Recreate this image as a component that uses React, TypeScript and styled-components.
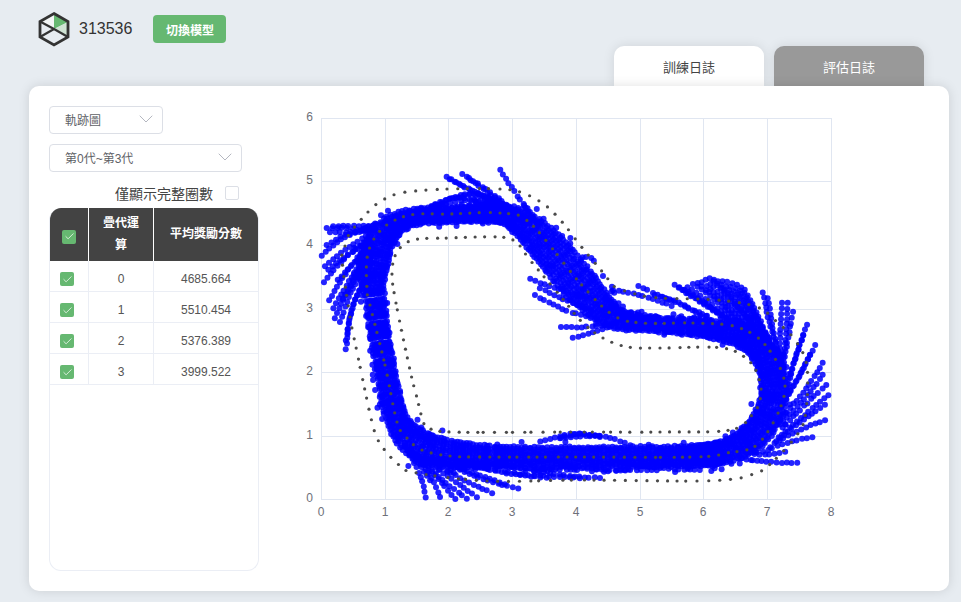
import React from 'react';
import styled, {createGlobalStyle} from 'styled-components';
import {Check, ChevronDown} from 'lucide-react';

type Pt = [number, number, number?];

// seeded so the scatter stays the same between renders
let seed = 12345;
const rnd = () => {
    seed = (seed * 1664525 + 1013904223) % 4294967296;
    return seed / 4294967296;
};

const sampleCurve = (pts: Pt[], step: number, closed = false) => {
    const get = (i: number) => closed
        ? pts[(i + pts.length) % pts.length]
        : pts[Math.max(0, Math.min(pts.length - 1, i))];
    const dense: number[][] = [];
    const segs = closed ? pts.length : pts.length - 1;
    for (let i = 0; i < segs; i++) {
        const [a, b, c, d] = [get(i - 1), get(i), get(i + 1), get(i + 2)];
        for (let k = 0; k < 24; k++) {
            const t = k / 24;
            const cr = (p0: number, p1: number, p2: number, p3: number) =>
                0.5 * (2 * p1 + (p2 - p0) * t + (2 * p0 - 5 * p1 + 4 * p2 - p3) * t * t + (3 * p1 - p0 - 3 * p2 + p3) * t * t * t);
            dense.push([
                cr(a[0], b[0], c[0], d[0]),
                cr(a[1], b[1], c[1], d[1]),
                (b[2] ?? 0) * (1 - t) + (c[2] ?? 0) * t,
            ]);
        }
    }
    if (!closed) {
        const last = pts[pts.length - 1];
        dense.push([last[0], last[1], last[2] ?? 0]);
    }
    const out: { x: number, y: number, w: number, nx: number, ny: number }[] = [];
    let left = 0;
    for (let i = 1; i < dense.length; i++) {
        const [x0, y0, w0] = dense[i - 1];
        const [x1, y1] = dense[i];
        const len = Math.hypot(x1 - x0, y1 - y0) || 1;
        if (left <= 0) {
            out.push({x: x0, y: y0, w: w0, nx: -(y1 - y0) / len, ny: (x1 - x0) / len});
            left += step;
        }
        left -= len;
    }
    return out;
};

const bandLine: Pt[] = [
    [375, 300, 9], [385, 365, 9], [397, 420, 10], [420, 446, 15], [453, 454, 13], [500, 457, 10],
    [600, 457, 10], [690, 456, 10], [730, 450, 11], [755, 435, 13], [770, 410, 13], [774, 385, 12],
    [766, 358, 12], [745, 337, 11], [700, 328, 8], [642, 323, 7], [612, 316, 11], [582, 288, 17],
    [552, 252, 17], [526, 226, 13], [500, 214, 9], [450, 215, 7], [410, 218, 8], [385, 233, 12], [373, 265, 15],
];

const innerLine: Pt[] = [
    [396, 303], [392, 273], [397, 252], [413, 240], [448, 238], [500, 237], [517, 243], [530, 260], [562, 298],
    [582, 322], [603, 338], [628, 347], [660, 348], [723, 348], [750, 362], [760, 383], [760, 400], [752, 415],
    [730, 430], [660, 432], [580, 432], [452, 432], [428, 427], [423, 421], [417, 398], [410, 370],
];

const middleLine: Pt[] = [
    [385, 365], [397, 422], [407, 438], [422, 450], [450, 456], [487, 457], [580, 457], [693, 457], [727, 453],
    [760, 442], [785, 390], [767, 347], [737, 327], [693, 323], [642, 323], [613, 315], [580, 283], [530, 223],
    [500, 213], [448, 214], [410, 215], [383, 228], [368, 253], [367, 290], [370, 305],
];

const outerLine: Pt[] = [
    [368, 212], [378, 203], [391, 196], [406, 192], [447, 189], [500, 189], [523, 193], [545, 205], [563, 223],
    [580, 245], [605, 275], [615, 287], [640, 295], [660, 298], [717, 300], [757, 307], [777, 322], [795, 340],
    [807, 367], [805, 417], [793, 440], [767, 467], [755, 473], [740, 478], [697, 481], [580, 480], [487, 481],
    [412, 472], [397, 463], [388, 454], [378, 440], [371, 418], [357, 352], [350, 317], [342, 260], [345, 246], [350, 233],
];

// [end of the streak, bend, where it joins the band]
const leftFan: Pt[][] = [
    [[333, 226], [350, 226], [375, 226]], [[327, 228], [345, 228], [372, 232]], [[330, 232], [350, 232], [378, 228]],
    [[327, 245], [345, 235], [375, 230]], [[322, 256], [340, 240], [375, 224]], [[325, 266], [345, 250], [372, 232]],
    [[328, 270], [348, 255], [372, 240]], [[324, 282], [345, 258], [372, 236]], [[329, 300], [348, 270], [372, 240]],
    [[333, 308], [350, 280], [370, 245]], [[335, 318], [350, 285], [372, 250]], [[340, 322], [352, 290], [372, 255]],
    [[346, 340], [355, 300], [375, 270]], [[346, 349], [352, 310], [372, 262]],
];

const rightFanTop: Pt[][] = [
    [[675, 285], [698, 298], [735, 325]], [[682, 290], [705, 305], [745, 332]], [[693, 284], [715, 300], [750, 335]],
    [[702, 282], [728, 306], [762, 345]], [[710, 278], [735, 305], [768, 345]], [[718, 281], [742, 310], [772, 350]],
    [[727, 282], [748, 310], [775, 352]], [[737, 285], [755, 315], [776, 355]], [[745, 290], [760, 320], [778, 360]],
];

const rightFanLow: Pt[][] = [
    [[763, 292], [770, 325], [783, 365]], [[768, 298], [773, 330], [782, 372]], [[782, 303], [780, 340], [782, 380]],
    [[788, 303], [785, 345], [780, 385]], [[793, 312], [786, 350], [781, 390]], [[807, 325], [795, 360], [785, 400]],
    [[803, 335], [793, 365], [783, 398]], [[815, 345], [800, 375], [780, 410]], [[810, 355], [797, 380], [780, 405]],
    [[823, 363], [805, 390], [780, 420]], [[823, 375], [805, 398], [780, 425]], [[826, 385], [805, 405], [780, 430]],
    [[828, 395], [805, 415], [775, 440]], [[825, 405], [803, 420], [775, 442]], [[825, 420], [800, 430], [770, 445]],
    [[812, 437], [790, 442], [760, 453]],
];

const bottomFan: Pt[][] = [
    [[426, 497], [420, 475], [405, 445]], [[430, 480], [420, 465], [410, 448]], [[440, 497], [430, 475], [410, 448]],
    [[455, 499], [435, 475], [412, 450]], [[467, 499], [440, 478], [415, 452]], [[477, 497], [450, 478], [420, 455]],
    [[492, 493], [460, 478], [425, 456]], [[505, 484], [470, 472], [430, 458]], [[518, 489], [480, 478], [430, 456]],
    [[547, 478], [500, 472], [440, 458]], [[580, 478], [520, 474], [450, 462]], [[577, 470], [520, 468], [455, 460]],
];

const otherStreaks: Pt[][] = [
    [[343, 300], [355, 280], [375, 250]], [[338, 280], [355, 262], [375, 240]],
    [[447, 177], [470, 190], [510, 207]], [[450, 179], [475, 192], [515, 210]], [[462, 174], [485, 190], [525, 222]],
    [[469, 178], [490, 192], [520, 215]], [[500, 170], [515, 192], [540, 228]],
    [[432, 207], [470, 194], [512, 212]], [[422, 212], [460, 198], [525, 218]], [[453, 198], [485, 196], [530, 225]],
    [[440, 205], [480, 200], [520, 214]], [[470, 205], [500, 205], [530, 220]],
    [[530, 279], [560, 290], [590, 300]], [[535, 295], [565, 310], [600, 320]], [[540, 288], [565, 300], [595, 312]],
    [[561, 327], [585, 327], [612, 324]], [[573, 338], [590, 333], [615, 325]],
    [[638, 286], [670, 300], [712, 318]], [[613, 290], [640, 295], [672, 306]], [[655, 295], [680, 303], [705, 318]],
    [[797, 463], [770, 462], [738, 458]], [[785, 452], [765, 455], [745, 452]],
    [[700, 470], [660, 468], [620, 463]], [[657, 470], [610, 470], [560, 466]], [[600, 478], [570, 476], [530, 470]],
    [[560, 438], [580, 434], [602, 437]], [[630, 445], [600, 436], [560, 438]], [[540, 442], [570, 434], [600, 436]],
];

// adds a streak between each two neighbours, the top of the right fan is dense in the chart
const thicken = (fan: Pt[][]) => fan.flatMap((s, i) => {
    const next = fan[i + 1];
    if (!next) return [s];
    const mid = s.map((p, k) => [(p[0] + next[k][0]) / 2, (p[1] + next[k][1]) / 2] as Pt);
    return [s, mid];
});

const buildBlue = () => {
    const dots: { x: number, y: number }[] = [];
    sampleCurve(bandLine, 3.4, true).forEach(p => {
        for (let lane = -1; lane <= 1.001; lane += 0.2) {
            const off = lane * p.w + (rnd() - 0.5) * 1.5;
            dots.push({x: p.x + p.nx * off + (rnd() - 0.5), y: p.y + p.ny * off + (rnd() - 0.5)});
        }
        // stray points mostly fall on the outside of the bend
        if (rnd() < 0.4) {
            const off = (rnd() < 0.15 ? -1 : 1) * p.w * (1.1 + rnd() * 0.5);
            dots.push({x: p.x + p.nx * off, y: p.y + p.ny * off});
        }
    });
    [...leftFan, ...thicken(rightFanTop), ...rightFanLow, ...bottomFan, ...otherStreaks].forEach(s => {
        sampleCurve(s, 5, false).forEach(p => {
            dots.push({x: p.x + (rnd() - 0.5) * 0.8, y: p.y + (rnd() - 0.5) * 0.8});
        });
    });
    return dots;
};

const blueDots = buildBlue();
const trackDots = [
    ...sampleCurve(innerLine, 9.6, true),
    ...sampleCurve(middleLine, 9.6, true),
    ...sampleCurve(outerLine, 10.5, true),
];

const xLines = [321, 385, 448, 512, 576, 640, 703, 767, 831];
const yLines = [499, 436, 372, 309, 245, 181, 118];

const rows = [
    {id: 0, score: '4685.664'},
    {id: 1, score: '5510.454'},
    {id: 2, score: '5376.389'},
    {id: 3, score: '3999.522'},
];

function App() {
    return (
        <Page>
            <GlobalStyle/>
            <Header>
                <svg width="32" height="36" viewBox="0 0 32 36">
                    <polygon points="16,3 30,11 16,18" fill="#66b871"/>
                    <polygon points="30,11 30,26 16,18" fill="#cfe3d4"/>
                    <polygon points="16,3 2,11 16,18" fill="#f2f5f5"/>
                    <polygon points="16,2.5 30,10.5 30,26 16,34 2,26 2,10.5" fill="none" stroke="#333" strokeWidth="2.8"/>
                    <path d="M2 10.5 16 18 30 26M2 26 16 18" fill="none" stroke="#333" strokeWidth="2.2"/>
                </svg>
                <ModelName>313536</ModelName>
                <SwitchButton>切換模型</SwitchButton>
            </Header>
            <Tabs>
                <Tab $active>訓練日誌</Tab>
                <Tab>評估日誌</Tab>
            </Tabs>
            <Card>
                <Side>
                    <Select $width={114}>軌跡圖<ChevronDown size={24} strokeWidth={1} color="#b4b7c0"/></Select>
                    <Select $width={193}>第0代~第3代<ChevronDown size={24} strokeWidth={1} color="#b4b7c0"/></Select>
                    <FullLaps>
                        僅顯示完整圈數
                        <EmptyBox/>
                    </FullLaps>
                    <TableWrap>
                        <Table>
                            <thead>
                            <tr>
                                <HeadCell $width={39}><CheckBox><Check size={11} strokeWidth={1.6}/></CheckBox></HeadCell>
                                <HeadCell $width={65}>疊代運算</HeadCell>
                                <HeadCell>平均獎勵分數</HeadCell>
                            </tr>
                            </thead>
                            <tbody>
                            {rows.map(r => (
                                <tr key={r.id}>
                                    <Cell><CheckBox><Check size={11} strokeWidth={1.6}/></CheckBox></Cell>
                                    <Cell>{r.id}</Cell>
                                    <Cell>{r.score}</Cell>
                                </tr>
                            ))}
                            </tbody>
                        </Table>
                    </TableWrap>
                </Side>
                <Chart viewBox="290 106 560 420" width="560" height="420">
                    {xLines.map(x => <line key={x} x1={x + 0.5} x2={x + 0.5} y1={118} y2={499} stroke="#e0e6f1"/>)}
                    {yLines.map(y => <line key={y} x1={321} x2={831} y1={y + 0.5} y2={y + 0.5} stroke="#e0e6f1"/>)}
                    {blueDots.map((d, i) => <circle key={i} cx={d.x} cy={d.y} r={3} fill="rgba(0,0,255,0.86)"/>)}
                    {trackDots.map((d, i) => <circle key={i} cx={d.x} cy={d.y} r={1.6} fill="#4a4a4a"/>)}
                    {yLines.map((y, i) => <AxisText key={y} x={313} y={y + 3} textAnchor="end">{i}</AxisText>)}
                    {xLines.map((x, i) => <AxisText key={x} x={x} y={516} textAnchor="middle">{i}</AxisText>)}
                </Chart>
            </Card>
        </Page>
    );
}

export default App;

const GlobalStyle = createGlobalStyle`
  html, body {
    margin: 0;
    background: #e7ecf1;
  }

  body {
    font-family: "Liberation Sans", "Noto Sans CJK TC", sans-serif;
  }
`

const Page = styled.div`
  height: 602px;
  overflow: hidden;
  padding: 11px 12px 0 29px;
  box-sizing: border-box;
`

const Header = styled.div`
  display: flex;
  align-items: center;
  height: 35px;
  padding-left: 9px;
`

const ModelName = styled.span`
  margin-left: 9px;
  font-size: 16px;
  color: #333;
`

const SwitchButton = styled.div`
  margin-left: 21px;
  margin-top: 1px;
  width: 73px;
  height: 28px;
  display: flex;
  align-items: center;
  justify-content: center;
  border-radius: 4px;
  background: #66b871;
  color: #fff;
  font-size: 12px;
  font-weight: 700;
`

const Tabs = styled.div`
  display: flex;
  justify-content: flex-end;
  gap: 10px;
  padding-right: 25px;
`

const Tab = styled.div<{ $active?: boolean }>`
  width: 150px;
  height: 40px;
  display: flex;
  align-items: center;
  justify-content: center;
  border-radius: 10px 10px 0 0;
  font-size: 13px;
  color: ${p => p.$active ? '#444' : '#fff'};
  background: ${p => p.$active ? '#fff' : '#999'};
  box-shadow: 0 0 12px rgba(0, 0, 0, 0.1);
`

const Card = styled.div`
  position: relative;
  display: flex;
  height: 505px;
  box-sizing: border-box;
  padding: 20px;
  background: #fff;
  border-radius: 10px;
  box-shadow: 0 0 12px rgba(0, 0, 0, 0.12);
`

const Side = styled.div`
  width: 210px;
  flex: none;
  display: flex;
  flex-direction: column;
  align-items: flex-start;
`

const Select = styled.div<{ $width: number }>`
  width: ${p => p.$width}px;
  height: 28px;
  box-sizing: border-box;
  margin-bottom: 10px;
  padding: 0 4px 2px 15px;
  display: flex;
  align-items: center;
  justify-content: space-between;
  border: 1px solid #dcdfe6;
  border-radius: 4px;
  font-size: 12px;
  color: #606266;
`

const FullLaps = styled.div`
  display: flex;
  align-items: center;
  gap: 12px;
  align-self: flex-start;
  height: 24px;
  margin: -1px 0 0 66px;
  font-size: 14px;
  color: #444;
`

const EmptyBox = styled.span`
  width: 14px;
  height: 14px;
  box-sizing: border-box;
  border: 1px solid #dcdfe6;
  border-radius: 2px;
`

const TableWrap = styled.div`
  width: 210px;
  height: 363px;
  margin-top: 3px;
  box-sizing: border-box;
  border: 1px solid #ebeef5;
  border-top: none;
  border-radius: 12px;
  overflow: hidden;
`

const Table = styled.table`
  width: 100%;
  table-layout: fixed;
  border-collapse: separate;
  border-spacing: 0;
`

const HeadCell = styled.th<{ $width?: number }>`
  width: ${p => p.$width ? `${p.$width}px` : 'auto'};
  height: 53px;
  box-sizing: border-box;
  padding: 0 10px 1px;
  background: #434343;
  color: #fff;
  font-size: 12px;
  font-weight: 700;
  line-height: 22px;
  text-align: center;
  border-right: 1px solid #fff;

  &:first-child {
    padding: 4px 0 1px;
  }

  &:last-child {
    border-right: none;
  }
`

const Cell = styled.td`
  height: 31px;
  box-sizing: border-box;
  padding: 6px 0 0;
  text-align: center;
  font-size: 12px;
  color: #555;
  border-bottom: 1px solid #ebeef5;
  border-right: 1px solid #ebeef5;

  &:first-child {
    padding-right: 4px;
  }

  &:last-child {
    border-right: none;
  }
`

const CheckBox = styled.span`
  display: inline-flex;
  align-items: center;
  justify-content: center;
  width: 14px;
  height: 14px;
  vertical-align: middle;
  border-radius: 2px;
  background: #66b871;
  color: #fff;
`

const Chart = styled.svg`
  flex: none;
  margin-left: 31px;
  display: block;
`

const AxisText = styled.text`
  font-size: 12px;
  fill: #6e7079;
`
